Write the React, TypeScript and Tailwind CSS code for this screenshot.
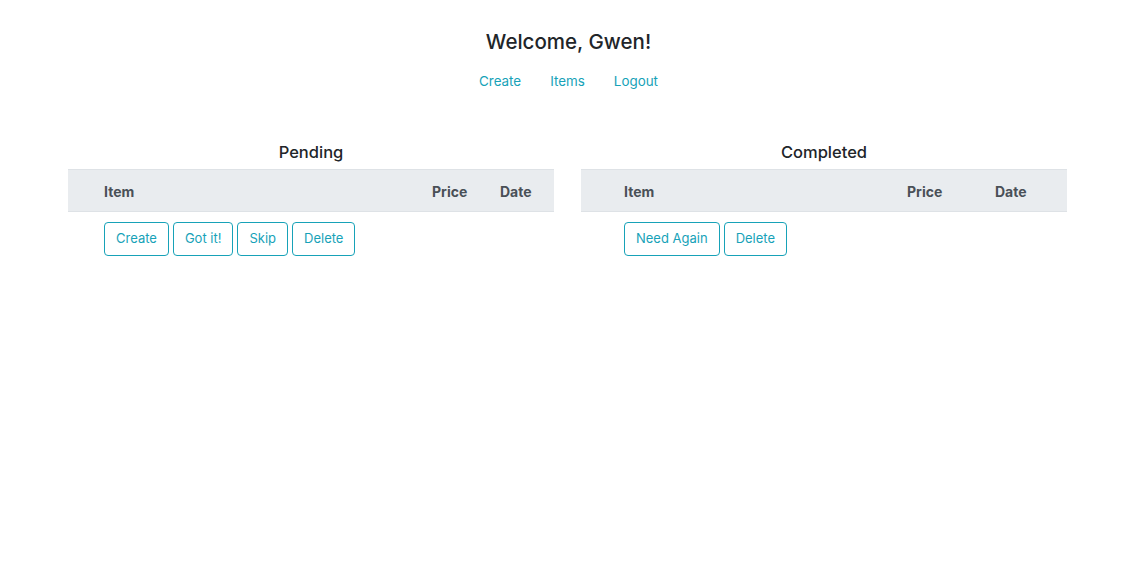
import * as React from "react"

const teal = "text-[#17a2b8]"

function OutlineButton({ label }: { label: string }) {
  return (
    <button
      className={`h-[34px] rounded-[4px] border border-[#17a2b8] bg-white px-[11px] text-[13px] ${teal}`}
    >
      {label}
    </button>
  )
}

interface PanelProps {
  title: string
  itemLeft: string
  priceLeft: string
  dateLeft: string
  actions: string[]
}

function Panel({ title, itemLeft, priceLeft, dateLeft, actions }: PanelProps) {
  return (
    <div className="w-[486px]">
      <h2 className="mb-[6px] text-center text-[16.5px] leading-[22px] font-medium text-[#212529]">{title}</h2>
      <div className="relative h-[43px] border-t border-b border-[#dee2e6] bg-[#e9ecef] text-[14px] font-bold text-[#495057]">
        <span className="absolute top-[11px]" style={{ left: itemLeft }}>Item</span>
        <span className="absolute top-[11px]" style={{ left: priceLeft }}>Price</span>
        <span className="absolute top-[11px]" style={{ left: dateLeft }}>Date</span>
      </div>
      <div className="flex gap-[4px] pt-[10px]" style={{ paddingLeft: itemLeft }}>
        {actions.map((a) => (
          <OutlineButton key={a} label={a} />
        ))}
      </div>
    </div>
  )
}

export default function App() {
  return (
    <div className="min-h-[576px] bg-white font-['Inter',sans-serif]">
      <div className="pt-[30px] text-center">
        <h1 className="text-[20.5px] leading-[24px] font-medium text-[#212529]">Welcome, Gwen!</h1>
        <nav className="mt-[17px] flex justify-center gap-[29px] text-[13.4px] leading-[20px]">
          <a className={teal}>Create</a>
          <a className={teal}>Items</a>
          <a className={teal}>Logout</a>
        </nav>
      </div>
      <div className="mt-[50px] flex justify-center gap-[27px] pr-[2px]">
        <Panel
          title="Pending"
          itemLeft="36px"
          priceLeft="364px"
          dateLeft="432px"
          actions={["Create", "Got it!", "Skip", "Delete"]}
        />
        <Panel
          title="Completed"
          itemLeft="43px"
          priceLeft="326px"
          dateLeft="414px"
          actions={["Need Again", "Delete"]}
        />
      </div>
    </div>
  )
}
